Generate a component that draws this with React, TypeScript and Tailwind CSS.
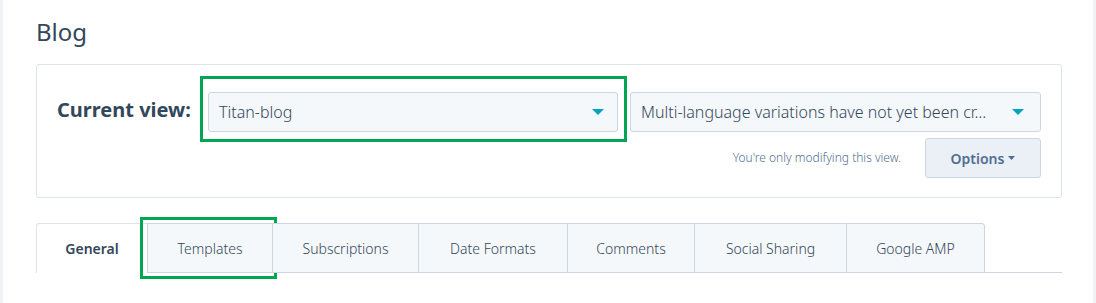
import React from "react";

const Caret = ({ className }: { className?: string }) => (
  <svg width="12" height="6" viewBox="0 0 12 6" className={className}>
    <path d="M0 0 L12 0 L6 6 Z" fill="#00a4bd" />
  </svg>
);

const tabs = [
  { label: "General", w: "w-[111px]" },
  { label: "Templates", w: "w-[125px]" },
  { label: "Subscriptions", w: "w-[146px]" },
  { label: "Date Formats", w: "w-[149px]" },
  { label: "Comments", w: "w-[127px]" },
  { label: "Social Sharing", w: "w-[152px]" },
  { label: "Google AMP", w: "w-[139px]" },
];

export default function App() {
  return (
    <div
      className="flex h-[303px] w-[1096px] bg-white text-[#33475b]"
      style={{ fontFamily: '"Noto Sans", "Open Sans", Lato, sans-serif' }}
    >
      <div className="w-[3px] bg-[#f0f2f5]" />
      <div className="flex-1 pl-[33px] pr-[31px]">
        <h1 className="mt-[16px] h-[32px] text-[24px] leading-[32px] font-normal text-[#33475b]">Blog</h1>

        <div className="mt-[16px] rounded-[3px] border border-[#dfe3eb] bg-white pl-[20px] pr-[20px] pt-[27px] pb-[19px]">
          <div className="flex items-center">
            <div className="w-[151px] text-[20px] font-bold leading-[28px] text-[#33475b] -mt-[4px]">Current view:</div>
            <div className="relative w-[410px]">
              <div className="flex h-[40px] items-center justify-between rounded-[3px] border border-[#cbd6e2] bg-[#f5f8fa] pl-[10px] pr-[13px]">
                <span className="text-[16px] font-light text-[#33475b]">Titan-blog</span>
                <Caret />
              </div>
              <div className="pointer-events-none absolute left-[-8px] right-[-9px] top-[-16px] bottom-[-10px] border-[3px] border-[#00a651]" />
            </div>
            <div className="ml-[12px] flex h-[40px] flex-1 items-center justify-between rounded-[3px] border border-[#cbd6e2] bg-[#f5f8fa] pl-[10px] pr-[16px]">
              <span className="truncate text-[16px] font-light text-[#33475b]">
                Multi-language variations have not yet been cr…
              </span>
              <Caret className="ml-[10px] shrink-0" />
            </div>
          </div>
          <div className="mt-[6px] flex items-center justify-end">
            <span className="mr-[24px] text-[12px] font-light text-[#516f90]">You're only modifying this view.</span>
            <div className="flex h-[40px] w-[116px] items-center justify-center rounded-[3px] border border-[#cbd6e2] bg-[#eaf0f6] text-[14px] font-semibold text-[#506e91]">
              Options
              <svg width="7" height="4" viewBox="0 0 7 4" className="ml-[4px]">
                <path d="M0 0 L7 0 L3.5 4 Z" fill="#506e91" />
              </svg>
            </div>
          </div>
        </div>

        <div className="mt-[25px] flex border-b border-[#cbd6e2]">
          {tabs.map((t, i) => {
            const active = i === 0;
            const last = i === tabs.length - 1;
            return (
              <div
                key={t.label}
                className={
                  "relative -mb-px flex h-[50px] items-center justify-center text-[14px] " +
                  t.w +
                  " " +
                  (active
                    ? "rounded-tl-[3px] border-l border-t border-[#dfe3eb] bg-white font-semibold text-[#33475b] pb-[1px]"
                    : "border-l border-t border-b border-[#cbd6e2] bg-[#f5f8fa] font-light text-[#33475b]") +
                  (last ? " rounded-tr-[3px] border-r" : "")
                }
              >
                {t.label}
                {t.label === "Templates" && (
                  <div className="pointer-events-none absolute left-[-8px] right-[-5px] top-[-7px] bottom-[-7px] border-[3px] border-[#00a651]" />
                )}
              </div>
            );
          })}
        </div>
      </div>
      <div className="w-[3px] bg-[#f0f2f5]" />
    </div>
  );
}
